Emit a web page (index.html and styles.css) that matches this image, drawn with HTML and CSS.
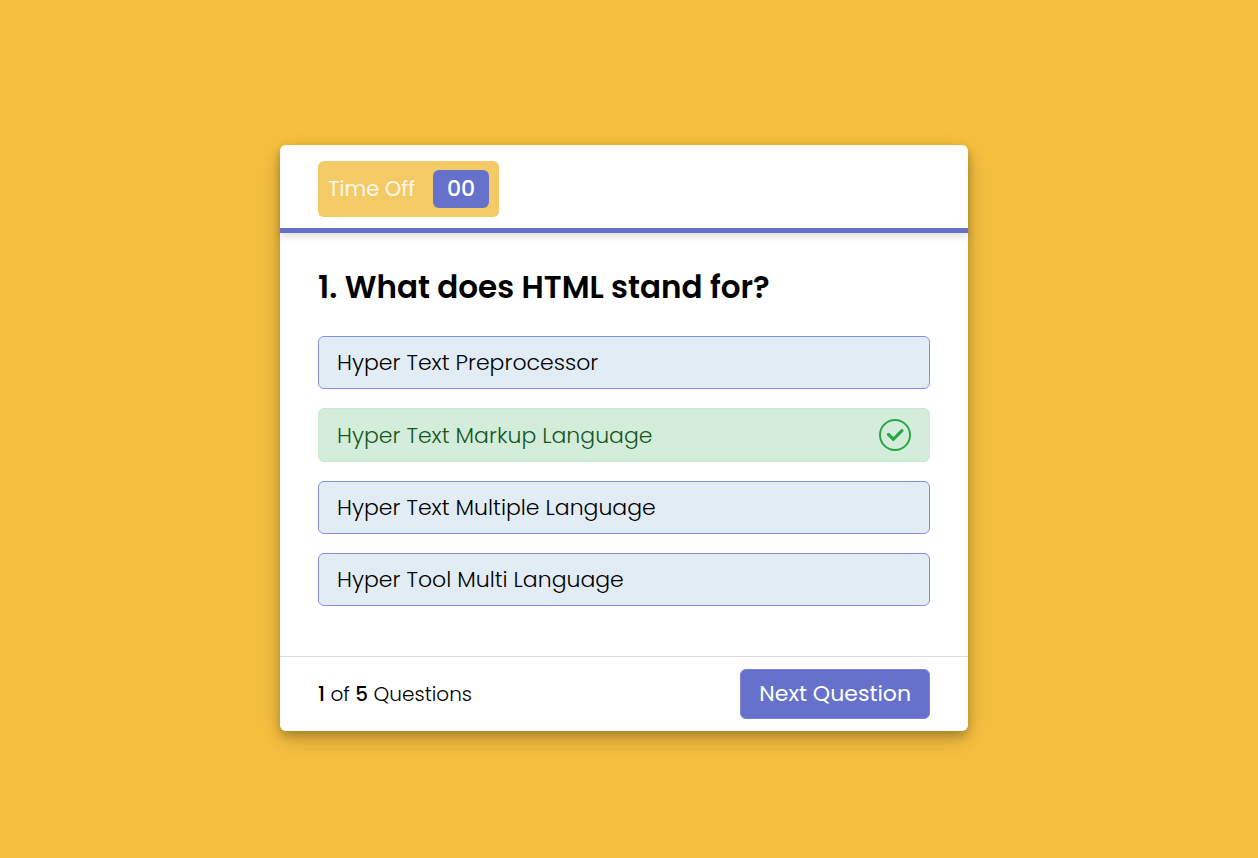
FILE: index.html
```html
<!DOCTYPE html>
<html lang="en">
<head>
<meta charset="utf-8">
<meta name="viewport" content="width=device-width, initial-scale=1">
<title>Quiz</title>
<link rel="stylesheet" href="styles.css">
</head>
<body>
<main class="quiz">
  <header class="quiz-header">
    <div class="timer">
      <span class="timer-label">Time Off</span>
      <span class="timer-value">00</span>
    </div>
  </header>
  <section class="quiz-body">
    <h1 class="question">1. What does HTML stand for?</h1>
    <div class="options">
      <button class="option" type="button">Hyper Text Preprocessor</button>
      <button class="option correct" type="button">Hyper Text Markup Language
        <svg class="tick" viewBox="0 0 32 32" aria-hidden="true">
          <circle cx="16" cy="16" r="15" fill="none" stroke="currentColor" stroke-width="2"/>
          <path d="M9.5 15.5l4.8 4.8 8.7-8.7" fill="none" stroke="currentColor" stroke-width="3.2" stroke-linecap="round"/>
        </svg>
      </button>
      <button class="option" type="button">Hyper Text Multiple Language</button>
      <button class="option" type="button">Hyper Tool Multi Language</button>
    </div>
  </section>
  <footer class="quiz-footer">
    <p class="count"><b>1</b> of <b>5</b> Questions</p>
    <button class="next" type="button">Next Question</button>
  </footer>
</main>
</body>
</html>
```
FILE: styles.css
```css
* { box-sizing: border-box; margin: 0; }

body {
  min-height: 100vh;
  padding: 18px 10px 0 0;
  display: flex;
  align-items: center;
  justify-content: center;
  background: #f6c03f;
  color: #000;
  font-family: Poppins, Inter, sans-serif;
}

button { font: inherit; cursor: pointer; }

.quiz {
  width: 100%;
  max-width: 688px;
  background: #fff;
  border-radius: 6px;
  box-shadow: 0 5px 10px rgba(0, 0, 0, 0.2), 0 8px 24px rgba(0, 0, 0, 0.19);
}

.quiz-header {
  display: flex;
  padding: 16px 38px 11px;
  border-bottom: 5px solid #6571cb;
  border-radius: 6px 6px 0 0;
  box-shadow: 0 4px 6px rgba(0, 0, 0, 0.1);
}

.timer {
  display: flex;
  align-items: center;
  justify-content: space-between;
  width: 181px;
  padding: 9px 10px;
  background: #f4ca66;
  border-radius: 6px;
}

.timer-label { font-size: 21px; line-height: 36px; color: #fdf7e8; }

.timer-value {
  width: 56px;
  border-radius: 6px;
  background: #6571cb;
  color: #fff;
  font-size: 22px;
  font-weight: 500;
  line-height: 38px;
  text-align: center;
}

.quiz-body { padding: 31px 38px 50px; }

.question { font-size: 31px; font-weight: 600; line-height: 46px; }

.options { display: grid; gap: 19px; margin-top: 26px; }

.option {
  display: flex;
  align-items: center;
  justify-content: space-between;
  padding: 10px 18px;
  border: 1px solid #8490d8;
  border-radius: 6px;
  background: #e1ecf4;
  color: #000;
  font-size: 22px;
  font-weight: 300;
  line-height: 31px;
  text-align: left;
}

.correct { border-color: #c9e9d1; background: #d4edda; color: #155724; }

.tick { width: 32px; height: 32px; color: #28a745; }

.quiz-footer {
  display: flex;
  align-items: center;
  justify-content: space-between;
  padding: 12px 38px;
  border-top: 1px solid #dcdcdc;
}

.count { font-size: 20px; font-weight: 300; line-height: 30px; }
.count b { font-weight: 500; }

.next {
  padding: 0 18px;
  border: 1px solid #7883d2;
  border-radius: 6px;
  background: #6571cb;
  color: #fff;
  font-size: 22px;
  font-weight: 400;
  line-height: 48px;
}
```
